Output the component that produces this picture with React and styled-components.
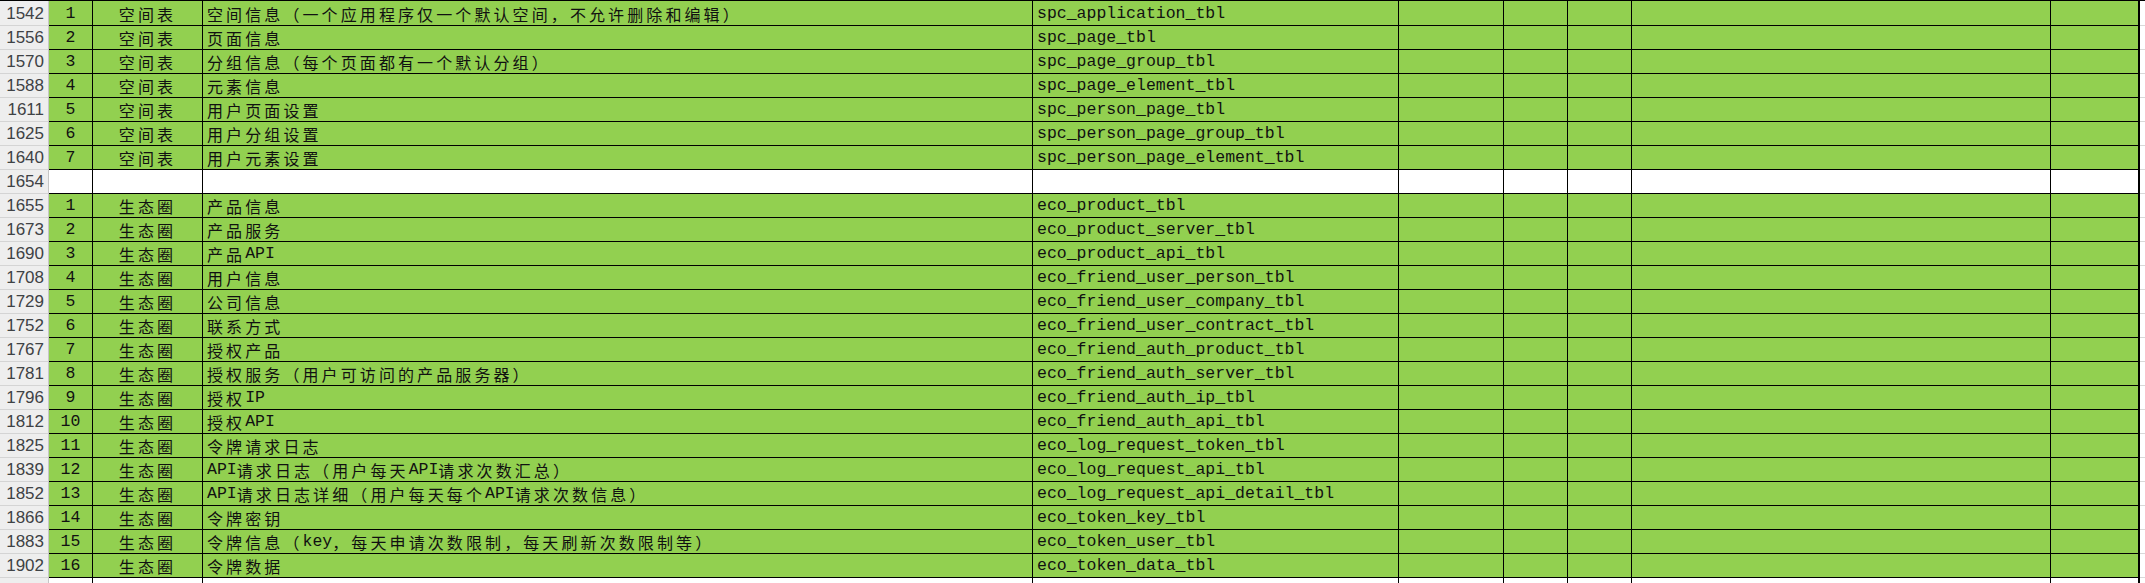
import React from "react";
import styled, { createGlobalStyle } from "styled-components";

const Global = createGlobalStyle`
  html, body { margin: 0; padding: 0; overflow: hidden; background: #ffffff; }
  body { font-family: "Liberation Mono", "Noto Sans CJK SC", monospace; }
`;

const Sheet = styled.div`
  padding-top: 1px;
  width: 2145px;
`;

const Row = styled.div`
  display: grid;
  grid-template-columns: 49px 44px 110px 830px 366px 105px 64px 64px 419px 89px 1fr;
  height: 24px;
  border-top: ${(p) => (p.$first ? "1px solid #000" : "none")};
  margin-top: ${(p) => (p.$first ? "-1px" : "0")};
  height: ${(p) => (p.$first ? "25px" : "24px")};
`;

const Head = styled.div`
  box-sizing: border-box;
  background: #eeeeee;
  border-right: 1px solid #c6c6c6;
  border-bottom: 1px solid #d4d4d4;
  font-family: "Liberation Sans", Arial, sans-serif;
  font-size: 17px;
  color: #3f4245;
  display: flex;
  align-items: flex-end;
  justify-content: flex-end;
  padding: 0 4px 1px 0;
  line-height: 20px;
`;

const Cell = styled.div`
  box-sizing: border-box;
  background: ${(p) => (p.$blank ? "#ffffff" : "#92d050")};
  border-right: ${(p) => (p.$thick ? "2px" : "1px")} solid #000;
  border-bottom: 1px solid #000;
  font-size: 16.5px;
  color: #111;
  display: flex;
  align-items: flex-end;
  justify-content: ${(p) => (p.$center ? "center" : "flex-start")};
  padding: 0 0 1px ${(p) => (p.$center ? "0" : "4px")};
  line-height: 20px;
  white-space: nowrap;
  overflow: hidden;
`;

const Tail = styled.div`
  border-bottom: 1px solid #d9d9d9;
  background: #ffffff;
`;

const Cjk = styled.span`
  font-family: "Noto Sans CJK SC", sans-serif;
  font-size: 16px;
  letter-spacing: 3.1px;
`;

const Latin = styled.span`
  font-family: "Liberation Mono", monospace;
`;

function Txt({ children }) {
  if (!children) return null;
  const parts = String(children).split(/([\u3000-\u9fff\uff00-\uffef]+)/).filter(Boolean);
  return parts.map((s, i) =>
    /[\u3000-\u9fff\uff00-\uffef]/.test(s) ? <Cjk key={i}>{s}</Cjk> : <Latin key={i}>{s}</Latin>
  );
}

const rows = [
  ["1542", "1", "空间表", "空间信息（一个应用程序仅一个默认空间，不允许删除和编辑）", "spc_application_tbl"],
  ["1556", "2", "空间表", "页面信息", "spc_page_tbl"],
  ["1570", "3", "空间表", "分组信息（每个页面都有一个默认分组）", "spc_page_group_tbl"],
  ["1588", "4", "空间表", "元素信息", "spc_page_element_tbl"],
  ["1611", "5", "空间表", "用户页面设置", "spc_person_page_tbl"],
  ["1625", "6", "空间表", "用户分组设置", "spc_person_page_group_tbl"],
  ["1640", "7", "空间表", "用户元素设置", "spc_person_page_element_tbl"],
  ["1654", null],
  ["1655", "1", "生态圈", "产品信息", "eco_product_tbl"],
  ["1673", "2", "生态圈", "产品服务", "eco_product_server_tbl"],
  ["1690", "3", "生态圈", "产品API", "eco_product_api_tbl"],
  ["1708", "4", "生态圈", "用户信息", "eco_friend_user_person_tbl"],
  ["1729", "5", "生态圈", "公司信息", "eco_friend_user_company_tbl"],
  ["1752", "6", "生态圈", "联系方式", "eco_friend_user_contract_tbl"],
  ["1767", "7", "生态圈", "授权产品", "eco_friend_auth_product_tbl"],
  ["1781", "8", "生态圈", "授权服务（用户可访问的产品服务器）", "eco_friend_auth_server_tbl"],
  ["1796", "9", "生态圈", "授权IP", "eco_friend_auth_ip_tbl"],
  ["1812", "10", "生态圈", "授权API", "eco_friend_auth_api_tbl"],
  ["1825", "11", "生态圈", "令牌请求日志", "eco_log_request_token_tbl"],
  ["1839", "12", "生态圈", "API请求日志（用户每天API请求次数汇总）", "eco_log_request_api_tbl"],
  ["1852", "13", "生态圈", "API请求日志详细（用户每天每个API请求次数信息）", "eco_log_request_api_detail_tbl"],
  ["1866", "14", "生态圈", "令牌密钥", "eco_token_key_tbl"],
  ["1883", "15", "生态圈", "令牌信息（key，每天申请次数限制，每天刷新次数限制等）", "eco_token_user_tbl"],
  ["1902", "16", "生态圈", "令牌数据", "eco_token_data_tbl"],
  ["", null],
];

export default function App() {
  return (
    <Sheet>
      <Global />
      {rows.map(([n, idx, cat, name, tbl], r) => {
        const blank = idx == null;
        return (
          <Row key={r} $first={r === 0}>
            <Head>{n}</Head>
            <Cell $blank={blank} $center><Txt>{idx}</Txt></Cell>
            <Cell $blank={blank} $center><Txt>{cat}</Txt></Cell>
            <Cell $blank={blank}><Txt>{name}</Txt></Cell>
            <Cell $blank={blank}><Txt>{tbl}</Txt></Cell>
            <Cell $blank={blank} />
            <Cell $blank={blank} />
            <Cell $blank={blank} />
            <Cell $blank={blank} />
            <Cell $blank={blank} $thick />
            <Tail />
          </Row>
        );
      })}
    </Sheet>
  );
}
